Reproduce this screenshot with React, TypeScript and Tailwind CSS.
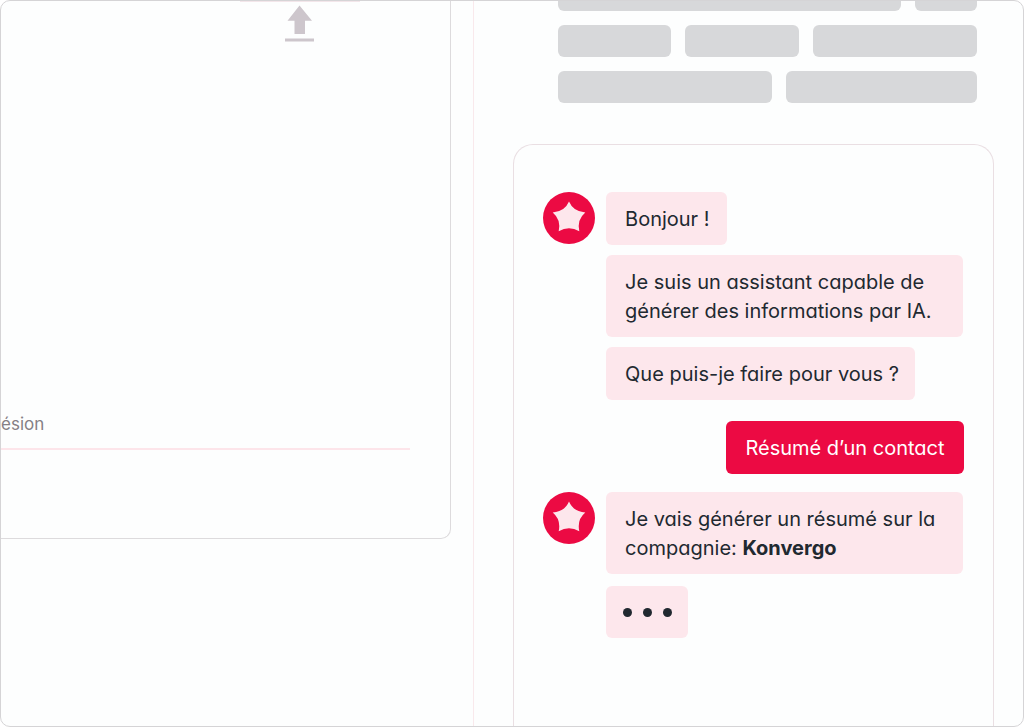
import type { ReactNode } from "react";

const placeholderRows: string[][] = [
  ["grow-[342]", "grow-[62]"],
  ["grow-[113]", "grow-[113]", "grow-[164]"],
  ["grow-[213]", "grow-[191]"],
];

function UploadIcon() {
  return (
    <svg width="30" height="37" viewBox="0 0 30 37" fill="#cdc6cc" aria-hidden="true">
      <path d="M14.500 .5 27 15.700H20V29H9.500V15.700H2.500Z" />
      <path d="M0 33.500H29V36.500H0Z" />
    </svg>
  );
}

function Avatar() {
  return (
    <svg className="shrink-0" width="52" height="52" viewBox="0 0 52 52" aria-hidden="true">
      <circle cx="26" cy="26" r="26" fill="#ec0a43" />
      <path
        d="M26 9.500Q30.200 19.600 42.300 20.500 33.800 27.500 36.300 39.300 26 33 15.700 39.300 18.200 27.500 9.700 20.500 21.800 19.600 26 9.500Z"
        fill="#fde7ec"
      />
    </svg>
  );
}

function Bubble({ className = "", children }: { className?: string; children: ReactNode }) {
  return (
    <p className={`rounded-md bg-[#fde7ec] pt-[13px] pb-[11px] pl-[19px] ${className}`}>
      {children}
    </p>
  );
}

export default function App() {
  return (
    <div className="flex min-h-screen overflow-hidden bg-white font-['Inter','Open_Sans',sans-serif] text-[#212930]">
      <div className="grid grow grid-cols-[474fr_550fr] overflow-hidden rounded-[10px] border border-[#d5d4d6] bg-[#fdfefe]">
        <section className="border-r border-[#f9e9ec] pr-[22px]">
          <div className="flex h-[538px] flex-col rounded-br-[10px] border-r border-b border-[#dddbdd] pr-10">
            <div className="mr-[50px] flex w-[120px] justify-center self-end border-t border-[#f3e6ea] pt-[3px]">
              <button type="button" aria-label="Importer">
                <UploadIcon />
              </button>
            </div>
            <div className="mt-auto mb-[88px] border-b-2 border-[#fde5ea] pb-3 text-[17px] leading-6 text-[#858085]">
              ésion
            </div>
          </div>
        </section>

        <section className="flex flex-col pr-[29px] pl-[39px]">
          <div className="-mt-[22px] mb-[41px] flex flex-col gap-3.5 pr-[17px] pl-[45px]">
            {placeholderRows.map((row, i) => (
              <div key={i} className="flex gap-3.5">
                {row.map((grow, j) => (
                  <div key={j} className={`h-8 basis-0 rounded-md bg-[#d7d8da] ${grow}`} />
                ))}
              </div>
            ))}
          </div>

          <div className="flex grow flex-col rounded-t-[20px] border border-b-0 border-[#eadfe3] px-[29px] pt-[47px] text-xl leading-[29px] [font-feature-settings:'cv11']">
            <div className="flex gap-[11px]">
              <Avatar />
              <div className="flex grow flex-col items-start gap-2.5">
                <Bubble className="w-[121px]">Bonjour !</Bubble>
                <Bubble className="w-[357px]">
                  Je suis un assistant capable de
                  <br />
                  générer des informations par IA.
                </Bubble>
                <Bubble className="w-[309px]">Que puis-je faire pour vous ?</Bubble>
              </div>
            </div>

            <button
              type="button"
              className="mt-[21px] mb-[18px] w-[238px] self-end rounded-md bg-[#ec0a43] pt-[13px] pb-[11px] text-white"
            >
              Résumé d’un contact
            </button>

            <div className="flex gap-[11px]">
              <Avatar />
              <div className="flex grow flex-col items-start gap-3">
                <Bubble className="w-[357px]">
                  Je vais générer un résumé sur la
                  <br />
                  compagnie: <strong className="font-bold">Konvergo</strong>
                </Bubble>
                <div
                  role="status"
                  aria-label="Rédaction en cours"
                  className="flex h-[52px] w-[82px] items-center justify-center gap-[11px] rounded-md bg-[#fde7ec]"
                >
                  <span className="size-[9px] rounded-full bg-[#212930]" />
                  <span className="size-[9px] rounded-full bg-[#212930]" />
                  <span className="size-[9px] rounded-full bg-[#212930]" />
                </div>
              </div>
            </div>
          </div>
        </section>
      </div>
    </div>
  );
}
